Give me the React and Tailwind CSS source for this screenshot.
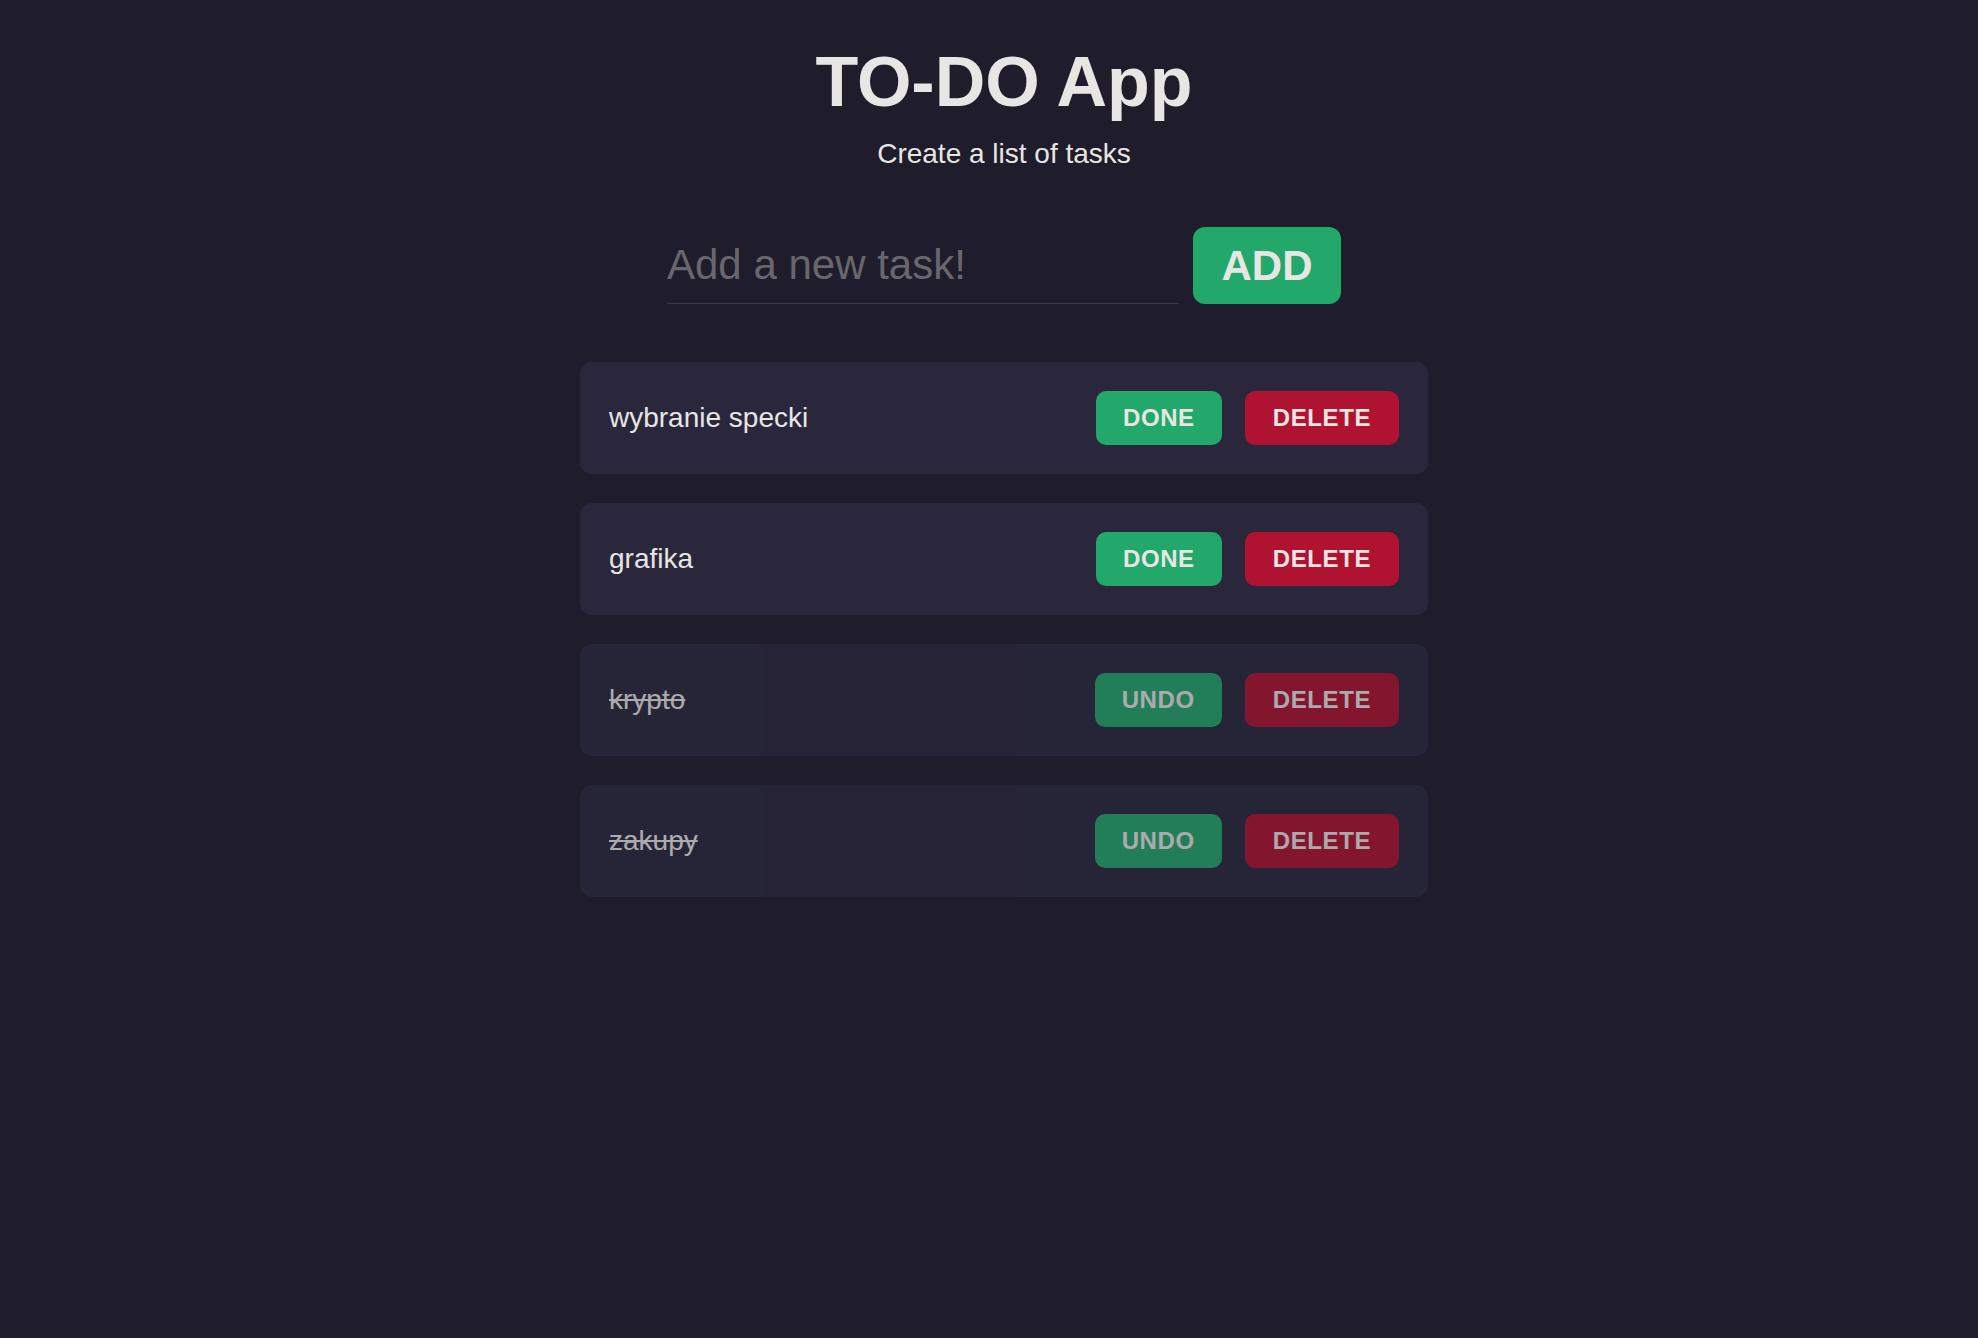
import React, { useState } from "react"

const initialTasks = [
  { id: 1, text: "wybranie specki", done: false },
  { id: 2, text: "grafika", done: false },
  { id: 3, text: "krypto", done: true },
  { id: 4, text: "zakupy", done: true },
]

const TaskItem = ({ task, onToggle, onDelete }) => {
  return (
    <div
      className={`flex items-center justify-between h-[112px] px-[29px] rounded-[12px] bg-[#2a273d] ${
        task.done ? "opacity-70" : ""
      }`}
    >
      <span className={`text-[28px] text-[#e8e6e3] ${task.done ? "line-through" : ""}`}>
        {task.text}
      </span>
      <div className="flex items-center gap-[23px]">
        <button
          type="button"
          onClick={() => onToggle(task.id)}
          className="h-[54px] px-[27px] rounded-[10px] bg-[#22a86b] text-[#e8e6e3] text-[24px] font-bold tracking-[0.6px] cursor-pointer"
        >
          {task.done ? "UNDO" : "DONE"}
        </button>
        <button
          type="button"
          onClick={() => onDelete(task.id)}
          className="h-[54px] px-[28px] rounded-[10px] bg-[#b01232] text-[#e8e6e3] text-[24px] font-bold tracking-[0.6px] cursor-pointer"
        >
          DELETE
        </button>
      </div>
    </div>
  )
}

const App = () => {
  const [tasks, setTasks] = useState(initialTasks)
  const [value, setValue] = useState("")

  const addTask = (e) => {
    e.preventDefault()
    if (!value.trim()) return
    setTasks((prev) => [...prev, { id: Date.now(), text: value.trim(), done: false }])
    setValue("")
  }

  const toggleTask = (id) => {
    setTasks((prev) => prev.map((t) => (t.id === id ? { ...t, done: !t.done } : t)))
  }

  const deleteTask = (id) => {
    setTasks((prev) => prev.filter((t) => t.id !== id))
  }

  return (
    <div className="min-h-screen bg-[#1f1d2b] text-[#e8e6e3] font-['Liberation_Sans',Arial,sans-serif] pl-[30px] pt-[47px] pb-10 flex flex-col items-center">
      <h1 className="text-[70px] leading-none font-bold">TO-DO App</h1>
      <p className="mt-[23px] text-[28px] leading-none">Create a list of tasks</p>

      <form onSubmit={addTask} className="mt-[59px] flex items-end gap-[14px]">
        <input
          type="text"
          value={value}
          onChange={(e) => setValue(e.target.value)}
          placeholder="Add a new task!"
          className="w-[512px] h-[77px] bg-transparent border-b border-[#3a3848] text-[42px] text-[#e8e6e3] placeholder:text-[#69666e] outline-none"
        />
        <button
          type="submit"
          className="w-[148px] h-[77px] rounded-[12px] bg-[#22a86b] text-[42px] font-bold text-[#e8e6e3] cursor-pointer"
        >
          ADD
        </button>
      </form>

      <div className="mt-[58px] w-[848px] flex flex-col gap-[29px]">
        {tasks.map((task) => (
          <TaskItem key={task.id} task={task} onToggle={toggleTask} onDelete={deleteTask} />
        ))}
      </div>
    </div>
  )
}

export default App
